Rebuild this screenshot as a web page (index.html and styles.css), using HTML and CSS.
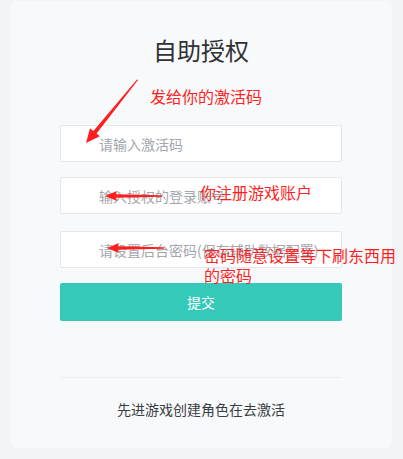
FILE: index.html
```html
<!DOCTYPE html>
<html lang="zh">
<head>
<meta charset="utf-8">
<title>自助授权</title>
<link rel="stylesheet" href="styles.css">
</head>
<body>
<div class="page">
  <div class="card">
    <h1 class="title">自助授权</h1>
    <form class="form">
      <input class="field" type="text" placeholder="请输入激活码">
      <input class="field" type="text" placeholder="输入授权的登录账号">
      <input class="field" type="password" placeholder="请设置后台密码(保存辅助数据配置)">
      <button class="submit" type="button">提交</button>
    </form>
    <div class="divider"></div>
    <p class="tip">先进游戏创建角色在去激活</p>
  </div>

  <svg class="arrows" width="403" height="459" viewBox="0 0 403 459">
    <polygon fill="#ff1f1f" points="138,80 96.6,133.6 99.8,136.2 86,143 90,128.2 93.4,131 137,79.4"/>
    <polygon fill="#ff1f1f" points="105,196 117,191 116,194.2 162,195.2 162,196.8 116,197.8 117,201"/>
    <polygon fill="#ff1f1f" points="107,248 119,243 118,246.2 164,247.2 164,248.8 118,249.8 119,253"/>
  </svg>
  <div class="note note-code">发给你的激活码</div>
  <div class="note note-account">你注册游戏账户</div>
  <div class="note note-pass">密码随意设置等下刷东西用<br>的密码</div>
</div>
</body>
</html>
```

FILE: styles.css
```css
* { box-sizing: border-box; }
html, body {
  margin: 0;
  padding: 0;
  background: #f3f4f8;
  font-family: "Noto Sans CJK SC", "Noto Sans", sans-serif;
}
.page {
  position: relative;
  width: 403px;
  height: 459px;
  padding: 1px 11px 0 10px;
}
.card {
  background: #f8f9fb;
  border-radius: 8px;
  height: 447px;
  padding: 34px 50px 0;
  display: flex;
  flex-direction: column;
}
.title {
  margin: 0;
  font-size: 24px;
  line-height: 30px;
  font-weight: 400;
  color: #303133;
  text-align: center;
}
.form {
  margin-top: 60px;
  display: flex;
  flex-direction: column;
}
.field {
  height: 37px;
  margin: 0 0 15px;
  border: 1px solid #e6e7ea;
  border-radius: 2px;
  background: #fff;
  padding: 0 0 0 38px;
  font-family: inherit;
  font-size: 14px;
  color: #333;
  outline: none;
}
.field:nth-child(2) { margin-bottom: 17px; }
.field::placeholder { color: #a3a6ad; }
.submit {
  height: 38px;
  border: 0;
  border-radius: 2px;
  background: #35c9ba;
  color: #fff;
  font-family: inherit;
  font-size: 14px;
  padding: 0;
}
.divider {
  margin-top: 56px;
  height: 1px;
  background: #eceef1;
}
.tip {
  margin: 21px 0 0;
  font-size: 14px;
  line-height: 20px;
  color: #3a3d42;
  text-align: center;
}
.arrows {
  position: absolute;
  left: 0;
  top: 0;
  pointer-events: none;
}
.note {
  position: absolute;
  font-size: 16px;
  line-height: 20px;
  color: #ff1f1f;
  white-space: nowrap;
}
.note-code { left: 150px; top: 86px; }
.note-account { left: 200px; top: 182px; }
.note-pass { left: 204px; top: 245px; }
```
